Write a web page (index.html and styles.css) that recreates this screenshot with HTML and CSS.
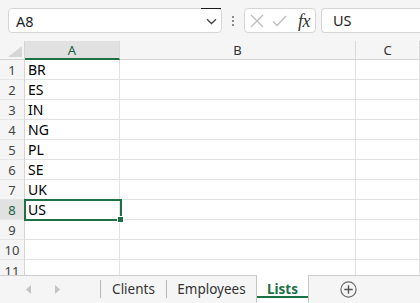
FILE: index.html
```html
<!DOCTYPE html>
<html>
<head>
<meta charset="utf-8">
<link rel="stylesheet" href="styles.css">
</head>
<body>
<div class="fbar">
  <div class="namebox">
    <span class="nb-text">A8</span>
    <span class="nb-drop"><svg width="11" height="7" viewBox="0 0 11 7"><path d="M1 1.2 L5.5 5.5 L10 1.2" fill="none" stroke="#444" stroke-width="1.3"/></svg></span>
  </div>
  <div class="dots"><i></i><i></i><i></i></div>
  <div class="fbtns">
    <svg class="ic-x" width="14" height="14" viewBox="0 0 14 14"><path d="M1 1 L13 13 M13 1 L1 13" stroke="#bdbdbd" stroke-width="1.3" fill="none"/></svg>
    <svg class="ic-ok" width="15" height="12" viewBox="0 0 15 12"><path d="M1 6.5 L5 10.5 L14 1" stroke="#bdbdbd" stroke-width="1.3" fill="none"/></svg>
    <span class="fx">fx</span>
  </div>
  <div class="finput">US</div>
</div>

<div class="sheet">
  <div class="grid">
    <div class="corner"><svg width="14" height="11" viewBox="0 0 14 11"><path d="M14 0 L14 11 L0 11 Z" fill="#d6d6d6"/></svg></div>
    <div class="ch sel">A</div>
    <div class="ch">B</div>
    <div class="ch">C</div>

    <div class="rh">1</div><div class="c">BR</div><div class="c"></div><div class="c"></div>
    <div class="rh">2</div><div class="c">ES</div><div class="c"></div><div class="c"></div>
    <div class="rh">3</div><div class="c">IN</div><div class="c"></div><div class="c"></div>
    <div class="rh">4</div><div class="c">NG</div><div class="c"></div><div class="c"></div>
    <div class="rh">5</div><div class="c">PL</div><div class="c"></div><div class="c"></div>
    <div class="rh">6</div><div class="c">SE</div><div class="c"></div><div class="c"></div>
    <div class="rh">7</div><div class="c">UK</div><div class="c"></div><div class="c"></div>
    <div class="rh sel">8</div><div class="c">US</div><div class="c"></div><div class="c"></div>
    <div class="rh">9</div><div class="c"></div><div class="c"></div><div class="c"></div>
    <div class="rh">10</div><div class="c"></div><div class="c"></div><div class="c"></div>
    <div class="rh last">11</div><div class="c"></div><div class="c"></div><div class="c"></div>
  </div>
  <div class="selbox"><span class="handle"></span></div>
</div>

<div class="tabs">
  <div class="navs">
    <svg width="6" height="9" viewBox="0 0 6 9"><path d="M5 0 L5 9 L0 4.5 Z" fill="#c4c4c4"/></svg>
    <svg width="6" height="9" viewBox="0 0 6 9"><path d="M1 0 L1 9 L6 4.5 Z" fill="#c4c4c4"/></svg>
  </div>
  <div class="tab sep t-clients">Clients</div>
  <div class="tab sep t-emp">Employees</div>
  <div class="tab active"><span>Lists</span></div>
  <div class="add"><svg width="17" height="17" viewBox="0 0 17 17"><circle cx="8.5" cy="8.5" r="7.6" fill="none" stroke="#6b6b6b" stroke-width="1.2"/><path d="M8.5 4.3 V12.7 M4.3 8.5 H12.7" stroke="#555" stroke-width="1.4"/></svg></div>
</div>
</body>
</html>
```

FILE: styles.css
```css
* { box-sizing: border-box; }
html, body { margin: 0; padding: 0; }
body {
  width: 420px;
  height: 303px;
  overflow: hidden;
  background: #f5f5f5;
  font-family: "Noto Sans", "Open Sans", sans-serif;
  color: #222;
}

.fbar {
  height: 41px;
  display: flex;
  align-items: flex-start;
  padding: 8px 0 0 8px;
  background: #f5f5f5;
}
.namebox {
  width: 214px;
  height: 25px;
  background: #fff;
  border: 1px solid #d6d6d6;
  border-radius: 4px;
  display: flex;
  align-items: center;
  justify-content: space-between;
}
.nb-text {
  font-size: 14.5px;
  padding-left: 7px;
  color: #1f1f1f;
}
.nb-drop {
  width: 20px;
  height: 24px;
  margin-top: -1px;
  border-top: 1px solid #1a1a1a;
  display: flex;
  align-items: center;
  justify-content: center;
  padding-top: 1px;
}
.dots {
  width: 22px;
  height: 25px;
  display: flex;
  flex-direction: column;
  align-items: center;
  justify-content: center;
  gap: 2px;
}
.dots i {
  display: block;
  width: 2px;
  height: 2px;
  background: #8a8a8a;
}
.fbtns {
  width: 72px;
  height: 25px;
  background: #fff;
  border: 1px solid #d6d6d6;
  border-radius: 4px;
  display: flex;
  align-items: center;
  padding-left: 5px;
  gap: 8px;
}
.fx {
  font-family: "Liberation Serif", "DejaVu Serif", serif;
  font-style: italic;
  font-size: 18px;
  color: #333;
  margin-left: 3px;
  line-height: 1;
  letter-spacing: -0.5px;
}
.finput {
  margin-left: 5px;
  flex: 1;
  height: 25px;
  background: #fff;
  border: 1px solid #d6d6d6;
  border-right: none;
  border-radius: 4px 0 0 4px;
  font-size: 14.5px;
  line-height: 23px;
  padding-left: 11px;
  color: #1f1f1f;
}

.sheet {
  position: relative;
  height: 234px;
  overflow: hidden;
  background: #fff;
}
.grid {
  display: grid;
  grid-template-columns: 25px 95px 236px 64px;
  grid-template-rows: 19px;
  grid-auto-rows: 20px;
}
.corner {
  background: #f5f5f5;
  border-right: 1px solid #d4d4d4;
  border-bottom: 1px solid #d4d4d4;
  display: flex;
  align-items: flex-end;
  justify-content: flex-end;
  padding: 0 2px 2px 0;
}
.ch {
  background: #f5f5f5;
  border-right: 1px solid #dadada;
  border-bottom: 1px solid #d4d4d4;
  font-size: 13px;
  line-height: 18px;
  text-align: center;
  color: #333;
}
.ch.sel {
  background: #e1e1e1;
  border-bottom: 2px solid #1e7145;
  color: #16603a;
}
.rh {
  background: #f5f5f5;
  border-right: 1px solid #d4d4d4;
  border-bottom: 1px solid #e6e6e6;
  font-size: 13px;
  line-height: 20px;
  text-align: center;
  color: #444;
}
.rh.last { line-height: 22px; }
.rh.sel {
  background: #e1e1e1;
  color: #16603a;
}
.c {
  border-right: 1px solid #e1e1e1;
  border-bottom: 1px solid #e1e1e1;
  font-size: 14px;
  line-height: 20px;
  padding-left: 3px;
  color: #000;
}

.selbox {
  position: absolute;
  left: 24px;
  top: 158px;
  width: 98px;
  height: 22px;
  border: 2px solid #1e7145;
}
.handle {
  position: absolute;
  right: -4px;
  bottom: -4px;
  width: 7px;
  height: 7px;
  background: #1e7145;
  border: 1px solid #fff;
}

.tabs {
  height: 28px;
  border-top: 1px solid #cfcfcf;
  background: #f5f5f5;
  display: flex;
  align-items: stretch;
  font-size: 13.5px;
  color: #333;
}
.navs {
  width: 100px;
  display: flex;
  align-items: center;
  padding-left: 26px;
  gap: 22px;
}
.tab {
  display: flex;
  align-items: center;
  justify-content: center;
  padding-bottom: 1px;
}
.tab.sep {
  border-left: 1px solid #b8b8b8;
  margin: 4px 0 5px 0;
}
.t-clients { width: 66px; }
.t-emp { width: 90px; }
.tab.active {
  margin-top: -1px;
  width: 53px;
  background: #fff;
  border-left: 1px solid #c8c8c8;
  border-right: 1px solid #c8c8c8;
  font-weight: bold;
  color: #1e7145;
  position: relative;
}
.tab.active::after {
  content: "";
  position: absolute;
  left: 0;
  right: 0;
  bottom: 5px;
  height: 2px;
  background: #1e7145;
}
.add {
  display: flex;
  align-items: center;
  padding-left: 31px;
}
```
